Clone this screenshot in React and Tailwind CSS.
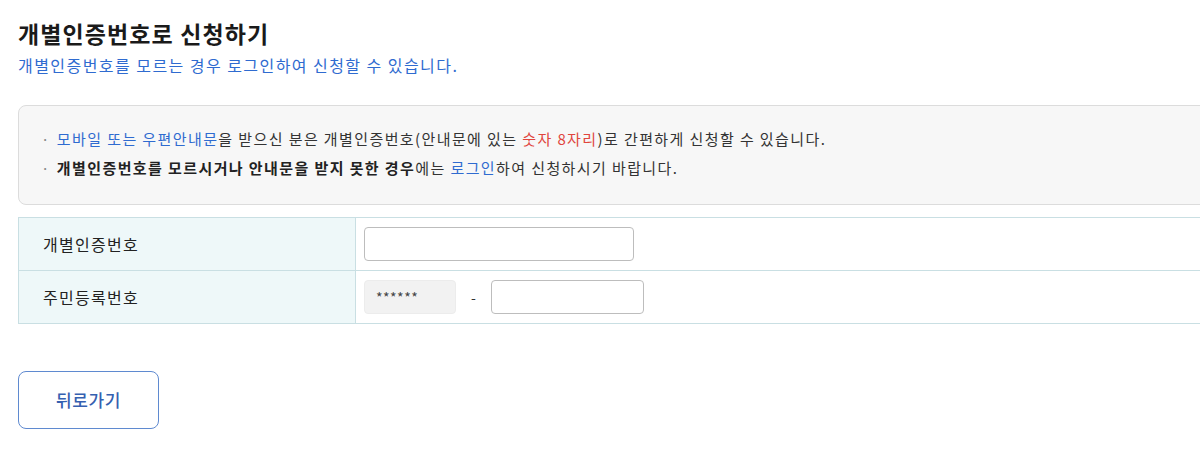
export default function App() {
  const font = { fontFamily: '"Noto Sans CJK KR", "Noto Sans", sans-serif' };
  return (
    <div className="w-[1200px] h-[449px] overflow-hidden bg-white text-[#222]" style={font}>
      <div className="pl-[18px] pt-[18px]">
        <h1 className="text-[23px] font-bold leading-[30px] tracking-[1.1px] text-[#1a1a1a]">개별인증번호로 신청하기</h1>
        <p className="mt-[6px] text-[16px] leading-[22px] tracking-[1.45px] text-[#2f6bd0]">개별인증번호를 모르는 경우 로그인하여 신청할 수 있습니다.</p>

        <div className="mt-[29px] w-[1200px] h-[100px] rounded-[8px] border border-[#dcdcdc] bg-[#f7f7f7] pl-[22px] pt-[18px] text-[15px] leading-[29px] tracking-[1.4px] text-[#333]">
          <div className="flex items-center">
            <span className="mr-[6px] text-[#888]">·</span>
            <span>
              <span className="text-[#2f6bd0]">모바일 또는 우편안내문</span>을 받으신 분은 개별인증번호(안내문에 있는 <span className="text-[#e0453d]">숫자 8자리</span>)로 간편하게 신청할 수 있습니다.
            </span>
          </div>
          <div className="flex items-center">
            <span className="mr-[6px] text-[#888]">·</span>
            <span>
              <span className="font-bold text-[#222]">개별인증번호를 모르시거나 안내문을 받지 못한 경우</span>에는 <span className="text-[#2f6bd0]">로그인</span>하여 신청하시기 바랍니다.
            </span>
          </div>
        </div>

        <div className="mt-[12px] w-[1200px] border-t border-b border-l border-[#c9dfe3] text-[16px] tracking-[1.3px]">
          <div className="flex h-[53px] border-b border-[#c9dfe3]">
            <div className="w-[337px] shrink-0 flex items-center pl-[24px] bg-[#eef8f9] border-r border-[#c9dfe3] text-[#222]">개별인증번호</div>
            <div className="flex items-center pl-[8px]">
              <div className="w-[270px] h-[34px] rounded-[4px] border border-[#bdbdbd] bg-white"></div>
            </div>
          </div>
          <div className="flex h-[52px]">
            <div className="w-[337px] shrink-0 flex items-center pl-[24px] bg-[#eef8f9] border-r border-[#c9dfe3] text-[#222]">주민등록번호</div>
            <div className="flex items-center pl-[8px]">
              <div className="w-[92px] h-[34px] rounded-[4px] bg-[#f2f2f2] border border-[#ececec] flex items-center pl-[11px] text-[14px] tracking-[0.5px] text-[#444]">******</div>
              <span className="ml-[15px] mr-[14px] text-[14px] text-[#333]">-</span>
              <div className="w-[153px] h-[34px] rounded-[4px] border border-[#bdbdbd] bg-white"></div>
            </div>
          </div>
        </div>

        <button className="mt-[47px] w-[141px] h-[58px] rounded-[8px] border border-[#5f8ad0] bg-white text-[17px] tracking-[0.6px] font-medium text-[#3560b0]">뒤로가기</button>
      </div>
    </div>
  );
}
